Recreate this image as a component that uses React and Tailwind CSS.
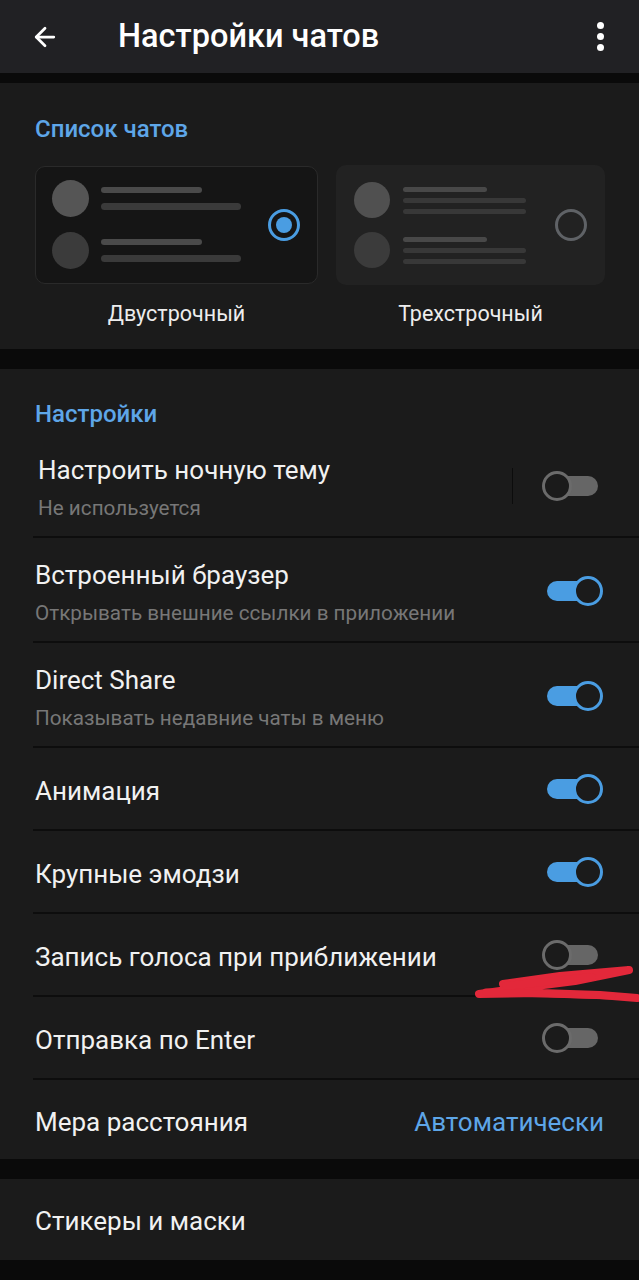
import React from 'react';
import { ArrowLeft } from 'lucide-react';

// Chat settings screen, dark theme.
const FONT = { fontFamily: 'Roboto, "Noto Sans", sans-serif' };

function Toggle({ on }) {
  if (on) {
    return (
      <div className="relative w-[56px] h-[30px] mr-[36px]">
        <div className="absolute left-0 top-[5px] w-[50px] h-[20px] rounded-full bg-[#4a9de2]" />
        <div className="absolute right-0 top-0 w-[30px] h-[30px] rounded-full bg-[#1b1b1b] border-[3px] border-[#4a9de2]" />
      </div>
    );
  }
  return (
    <div className="relative w-[56px] h-[30px] mr-[41px]">
      <div className="absolute right-0 top-[5px] w-[48px] h-[20px] rounded-full bg-[#666666]" />
      <div className="absolute left-0 top-0 w-[30px] h-[30px] rounded-full bg-[#1b1b1b] border-[3px] border-[#6b6b6b]" />
    </div>
  );
}

function Divider() {
  return <div className="h-[2px] ml-[33px] bg-[#0d0d0d]" />;
}

function TwoLineRow({ title, subtitle, on }) {
  return (
    <div className="h-[103px] flex items-start justify-between">
      <div className="pl-[35px] pt-[23px]">
        <div className="text-[26px] leading-[28px] text-[#f1f1f1]">{title}</div>
        <div className="mt-[12px] text-[20.7px] leading-[24px] text-[#777777]">{subtitle}</div>
      </div>
      <div className="pt-[38px]">
        <Toggle on={on} />
      </div>
    </div>
  );
}

function Row({ title, on }) {
  return (
    <div className="h-[81px] flex items-center justify-between">
      <div className="pl-[35px] pt-[4px] text-[26px] leading-[28px] text-[#f1f1f1]">{title}</div>
      <Toggle on={on} />
    </div>
  );
}

function Radio({ checked }) {
  if (checked) {
    return (
      <div className="w-[32px] h-[32px] rounded-full border-[3.5px] border-[#4a9de2] flex items-center justify-center">
        <div className="w-[16px] h-[16px] rounded-full bg-[#4a9de2]" />
      </div>
    );
  }
  return <div className="w-[32px] h-[32px] rounded-full border-[3px] border-[#5f6266]" />;
}

function TwoLineCard() {
  return (
    <div className="w-[283px] h-[118px] rounded-[10px] border border-[#2a2a2a] bg-[#151515] flex items-center pl-[16px] pr-[17px]">
      <div className="flex-1 flex flex-col gap-[15px]">
        {['bg-[#555555]', 'bg-[#3b3b3b]'].map((c, i) => (
          <div key={i} className="flex items-center gap-[12px]">
            <div className={`w-[37px] h-[37px] rounded-full ${c}`} />
            <div className="flex flex-col gap-[10px]">
              <div className="w-[101px] h-[6px] rounded-full bg-[#4a4a4a]" />
              <div className="w-[140px] h-[7px] rounded-full bg-[#3a3a3a]" />
            </div>
          </div>
        ))}
      </div>
      <Radio checked />
    </div>
  );
}

function ThreeLineCard() {
  return (
    <div className="w-[269px] h-[120px] rounded-[10px] bg-[#222222] flex items-center pl-[18px] pr-[18px]">
      <div className="flex-1 flex flex-col gap-[14px]">
        {['bg-[#505050]', 'bg-[#3b3b3b]'].map((c, i) => (
          <div key={i} className="flex items-center gap-[13px]">
            <div className={`w-[36px] h-[36px] rounded-full ${c}`} />
            <div className="flex flex-col gap-[6px]">
              <div className="w-[84px] h-[5px] rounded-full bg-[#484848]" />
              <div className="w-[123px] h-[5px] rounded-full bg-[#383838]" />
              <div className="w-[123px] h-[5px] rounded-full bg-[#383838]" />
            </div>
          </div>
        ))}
      </div>
      <Radio checked={false} />
    </div>
  );
}

export default function App() {
  return (
    <div className="relative w-[639px] h-[1280px] bg-[#0a0a0a] overflow-hidden" style={FONT}>
      {/* toolbar */}
      <div className="h-[73px] bg-[#212124] flex items-center">
        <ArrowLeft size={30} strokeWidth={2.2} className="ml-[30px] text-white" />
        <div className="ml-[58px] text-[32.5px] font-medium text-white leading-none">Настройки чатов</div>
        <div className="ml-auto mr-[35px] flex flex-col gap-[4px]">
          <div className="w-[7px] h-[7px] rounded-full bg-white" />
          <div className="w-[7px] h-[7px] rounded-full bg-white" />
          <div className="w-[7px] h-[7px] rounded-full bg-white" />
        </div>
      </div>

      {/* chat list style */}
      <div className="mt-[10px] h-[266px] bg-[#1b1b1b] px-[35px] pt-[32px]">
        <div className="text-[24px] leading-[28px] font-medium text-[#5ea6e8]">Список чатов</div>
        <div className="mt-[22px] flex gap-[18px] items-center">
          <div className="flex flex-col items-center">
            <TwoLineCard />
            <div className="mt-[16px] text-[21.5px] leading-[28px] text-[#ededed]">Двустрочный</div>
          </div>
          <div className="flex flex-col items-center">
            <ThreeLineCard />
            <div className="mt-[15px] text-[21.5px] leading-[28px] text-[#ededed]">Трехстрочный</div>
          </div>
        </div>
      </div>

      {/* settings */}
      <div className="mt-[20px] bg-[#1b1b1b]">
        <div className="h-[64px] pl-[35px] pt-[31px] text-[24px] leading-[28px] font-medium text-[#5ea6e8]">Настройки</div>
        <div className="h-[103px] flex items-start justify-between">
          <div className="pl-[38px] pt-[23px]">
            <div className="text-[26px] leading-[28px] text-[#f1f1f1]">Настроить ночную тему</div>
            <div className="mt-[12px] text-[20.7px] leading-[24px] text-[#777777]">Не используется</div>
          </div>
          <div className="flex items-center pt-[35px]">
            <div className="w-[1px] h-[36px] bg-[#0c0c0c] mr-[29px]" />
            <Toggle on={false} />
          </div>
        </div>
        <Divider />
        <TwoLineRow title="Встроенный браузер" subtitle="Открывать внешние ссылки в приложении" on />
        <Divider />
        <TwoLineRow title="Direct Share" subtitle="Показывать недавние чаты в меню" on />
        <Divider />
        <Row title="Анимация" on />
        <Divider />
        <Row title="Крупные эмодзи" on />
        <Divider />
        <Row title="Запись голоса при приближении" on={false} />
        <Divider />
        <Row title="Отправка по Enter" on={false} />
        <Divider />
        <div className="h-[79px] flex items-center justify-between">
          <div className="pl-[35px] pt-[4px] text-[26px] leading-[28px] text-[#f1f1f1]">Мера расстояния</div>
          <div className="pr-[35px] pt-[4px] text-[26px] leading-[28px] text-[#5ea6e8]">Автоматически</div>
        </div>
      </div>

      {/* stickers */}
      <div className="mt-[20px] h-[81px] bg-[#1b1b1b] flex items-center">
        <div className="pl-[35px] pt-[2px] text-[26px] leading-[28px] text-[#f1f1f1]">Стикеры и маски</div>
      </div>

      {/* red marker scribble drawn over the screenshot */}
      <svg className="absolute left-0 top-0 pointer-events-none" width="639" height="1280" viewBox="0 0 639 1280">
        <path
          d="M 503 984 L 560 976 L 629 970 L 575 981 L 520 988 L 479 994 L 540 993 L 600 995 L 637 998"
          fill="none"
          stroke="#e3283a"
          strokeWidth="8"
          strokeLinecap="round"
          strokeLinejoin="round"
        />
        <path d="M 506 986 L 592 977" fill="none" stroke="#e3283a" strokeWidth="8" strokeLinecap="round" />
        <path d="M 486 992 L 612 996" fill="none" stroke="#e3283a" strokeWidth="7" strokeLinecap="round" />
      </svg>
    </div>
  );
}
